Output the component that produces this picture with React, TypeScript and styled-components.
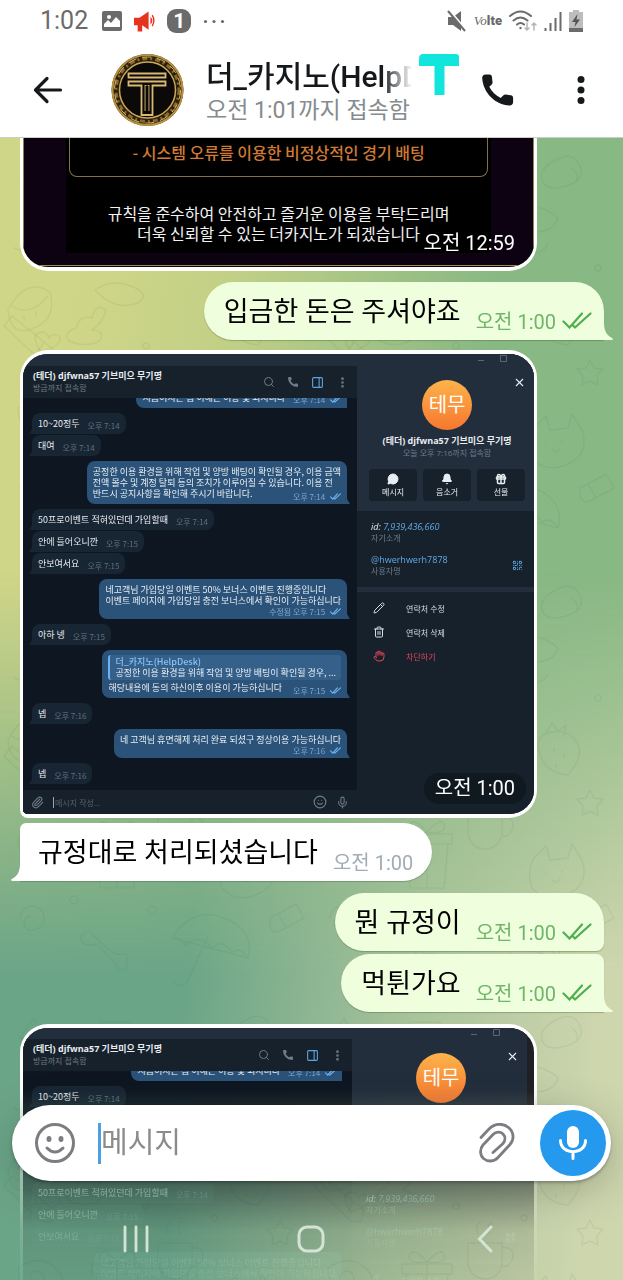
import React from "react";
import styled, { createGlobalStyle, css } from "styled-components";
import { Search, Phone, MoreVertical, X, Bell, Gift, Pencil, Trash2, Hand, Paperclip, Smile, Mic, PanelRight, QrCode, MessageCircle } from "lucide-react";

const GlobalStyle = createGlobalStyle`
  *, *::before, *::after { box-sizing: border-box; }
  body { margin: 0; font-family: Roboto, "Noto Sans CJK KR", sans-serif; }
  button { border: 0; padding: 0; background: none; color: inherit; font: inherit; cursor: pointer; }
  input { border: 0; padding: 0; background: none; outline: none; font: inherit; }
  a { color: inherit; text-decoration: none; }
  svg { display: block; flex: none; }
  p, h1, h2, figure { margin: 0; font-weight: 400; }
`;

/* ---------- page ---------- */

const Screen = styled.div`
  height: 100vh;
  display: flex;
  flex-direction: column;
  overflow: hidden;
  background: #fff;
`;

const StatusBar = styled.div`
  display: flex;
  align-items: center;
  justify-content: space-between;
  height: 42px;
  padding: 0 40px;
  color: #6b6b6b;
`;

const StatusGroup = styled.div<{ $gap: number }>`
  display: flex;
  align-items: center;
  gap: ${(p) => p.$gap}px;
`;

const Clock = styled.span`
  margin-right: 2px;
  font-size: 25px;
  line-height: 30px;
`;

const Badge = styled.span`
  width: 24px;
  height: 24px;
  border-radius: 9px;
  background: #6b6b6b;
  color: #fff;
  font-size: 21px;
  font-weight: 700;
  line-height: 24px;
  text-align: center;
`;

const Volte = styled.span`
  font-size: 13px;
  font-weight: 900;
  line-height: 20px;
  i { font: italic 400 13px "Liberation Serif", serif; }
`;

const Header = styled.header`
  display: flex;
  align-items: center;
  height: 96px;
  padding: 0 37px 0 33px;
  border-bottom: 1px solid #c9cfc6;
  color: #15191c;
`;

const IconButton = styled.button`
  display: grid;
  place-items: center;
  flex: none;
`;

const Spacer = styled.span<{ $w: number }>`
  flex: none;
  width: ${(p) => p.$w}px;
`;

const Raised = styled.span`
  align-self: flex-start;
  padding-top: 12px;
`;

const Peer = styled.div`
  flex: 1;
  min-width: 0;
  margin: 0 7px 0 22px;
  padding-top: 4px;
`;

const PeerName = styled.h1`
  overflow: hidden;
  white-space: nowrap;
  font-size: 30px;
  font-weight: 500;
  line-height: 38px;
  mask-image: linear-gradient(to right, #000 calc(100% - 30px), transparent);
`;

const PeerStatus = styled.p`
  overflow: hidden;
  white-space: nowrap;
  font-size: 23px;
  line-height: 30px;
  color: #858b8e;
`;

/* ---------- chat ---------- */

const Chat = styled.main`
  position: relative;
  flex: 1;
  min-height: 0;
  overflow: hidden;
  background: linear-gradient(98deg, #d0d688 12%, #c2d086 32%, #88b884 66%);
  &::before {
    content: "";
    position: absolute;
    inset: 0;
    background: linear-gradient(95deg, #6ba587 36%, #a9c39b 68%, #ced6ae 94%);
    mask-image: linear-gradient(to bottom, transparent 38%, #000 73%);
  }
`;

const Doodles = styled.svg`
  position: absolute;
  inset: 0;
  width: 100%;
  height: 100%;
`;

const Thread = styled.div`
  position: relative;
  display: flex;
  flex-direction: column;
  height: 100%;
  overflow: hidden;
  mask-image: linear-gradient(to bottom, #000 calc(100% - 190px), rgba(0, 0, 0, 0.4) calc(100% - 94px), rgba(0, 0, 0, 0.12) calc(100% - 50px), rgba(0, 0, 0, 0.06));
`;

const Photo = styled.figure<{ $top?: number; $flat?: boolean }>`
  position: relative;
  flex: none;
  width: 83%;
  margin: ${(p) => p.$top ?? 0}px 0 0 20px;
  overflow: hidden;
  border: 4px solid #fff;
  border-width: ${(p) => (p.$flat ? "0 3px 4px" : "4px 3px")};
  border-radius: ${(p) => (p.$flat ? "0 0 28px 28px" : "28px 28px 28px 8px")};
  background: #fff;
`;

const Stamp = styled.time<{ $clear?: boolean }>`
  position: absolute;
  right: ${(p) => (p.$clear ? 19 : 8)}px;
  bottom: ${(p) => (p.$clear ? 8 : 10)}px;
  padding: ${(p) => (p.$clear ? "1px 0" : "1px 11px")};
  border-radius: 15px;
  background: ${(p) => (p.$clear ? "none" : "rgba(8, 14, 20, 0.45)")};
  color: #fff;
  font-size: 20px;
  line-height: 29px;
`;

const Bubble = styled.div<{ $out?: boolean; $top: number; $corners: string }>`
  position: relative;
  flex: none;
  display: flex;
  align-self: ${(p) => (p.$out ? "flex-end" : "flex-start")};
  gap: 15px;
  height: 58px;
  margin: ${(p) => p.$top}px 19px 0 20px;
  padding: ${(p) => (p.$out ? "0 12px 0 20px" : "0 19px 0 18px")};
  border-radius: ${(p) => p.$corners};
  background: ${(p) => (p.$out ? "#efffde" : "#fff")};
  box-shadow: 0 1px 1px rgba(60, 90, 60, 0.35);
  white-space: nowrap;
`;

const Message = styled.p`
  font-size: 27px;
  line-height: 60px;
  color: #000;
`;

const Meta = styled.div<{ $out?: boolean }>`
  display: flex;
  align-items: center;
  align-self: flex-end;
  gap: 6px;
  height: 40px;
  font-size: 20px;
  color: ${(p) => (p.$out ? "#6fb668" : "#a2acb4")};
`;

const Tail = styled.svg<{ $out?: boolean }>`
  position: absolute;
  bottom: 0;
  ${(p) => (p.$out ? "right: -9px;" : "left: -9px; transform: scaleX(-1);")}
`;

/* ---------- notice poster ---------- */

const Poster = styled.div`
  height: 129px;
  padding: 0 42px;
  border: 1px solid #94804f;
  border-width: 0 1px;
  background: linear-gradient(#000, #000) center top / calc(100% - 84px) 115px no-repeat, linear-gradient(#a08c52, #a08c52) left 127px / 100% 1px no-repeat, #0c0211;
  color: #f2f2f2;
  font-family: "Noto Sans CJK KR", sans-serif;
  font-size: 16px;
  font-weight: 500;
  line-height: 20px;
  text-align: center;
  white-space: nowrap;
`;

const PosterRule = styled.p`
  height: 39px;
  margin: 0 3px 26px;
  padding-top: 4px;
  border: 1px solid #84714a;
  border-top: 0;
  border-radius: 0 0 8px 8px;
  font-weight: 500;
  color: #d27a34;
`;

/* ---------- desktop client screenshot ---------- */

const Desktop = styled.div<{ $small?: boolean }>`
  display: grid;
  grid-template-columns: ${(p) => (p.$small ? "minmax(0, 1fr) 175px 7px" : "minmax(0, 1fr) 177px")};
  background: #1f2024;
  color: #e8edf2;
  font-family: "Open Sans", "Noto Sans CJK KR", sans-serif;
  font-size: 9px;
  line-height: 11px;
  white-space: nowrap;
`;

const Pane = styled.section<{ $small?: boolean }>`
  padding-top: ${(p) => (p.$small ? 11 : 12)}px;
  background: #232e3c;
`;

const PaneHeader = styled.div`
  display: flex;
  align-items: center;
  gap: 12px;
  height: 32px;
  padding: 0 8px 0 10px;
  background: #17212b;
  color: #6d7c8a;
`;

const PaneTitle = styled.div`
  flex: 1;
`;

const Strong = styled.h2`
  font-size: 9px;
  font-weight: 700;
  line-height: 12px;
  color: #e8edf2;
`;

const Faint = styled.p`
  font-size: 8px;
  line-height: 12px;
  color: #6c7b88;
`;

const Log = styled.div`
  display: flex;
  flex-direction: column;
  gap: 1px;
  padding: 0 10px 6px 9px;
  background: #0e1621;
  font-family: "Noto Sans CJK KR", sans-serif;
`;

const Clip = styled.div`
  display: flex;
  align-items: flex-end;
  justify-content: flex-end;
  height: 10px;
  overflow: hidden;
`;

const Mini = styled.div<{ $out?: boolean; $first?: boolean; $stack?: boolean }>`
  display: flex;
  position: relative;
  flex-direction: ${(p) => (p.$stack ? "column" : "row")};
  align-self: ${(p) => (p.$out ? "flex-end" : "flex-start")};
  column-gap: 8px;
  margin-top: ${(p) => (p.$first ? 4 : 0)}px;
  padding: ${(p) => (p.$stack ? "5px 6px 2px" : "5px 6px")};
  border-radius: ${(p) => (p.$out ? "8px 8px 0 8px" : "8px 8px 8px 0")};
  background: ${(p) => (p.$out ? "#2b5278" : "#182533")};
  &::after {
    content: "";
    position: absolute;
    bottom: 0;
    border: 0 solid transparent;
    ${(p) =>
      p.$out
        ? css`
            right: -3px;
            border-width: 5px 0 0 3px;
            border-left-color: #2b5278;
          `
        : css`
            left: -3px;
            border-width: 5px 3px 0 0;
            border-right-color: #182533;
          `}
  }
`;

const MiniMeta = styled.span<{ $out?: boolean; $over?: boolean; $inline?: boolean }>`
  display: flex;
  align-items: center;
  align-self: flex-end;
  gap: 5px;
  height: 11px;
  margin: ${(p) => (p.$over ? -8 : 0)}px 0 ${(p) => (p.$inline ? -2 : 0)}px;
  font-size: 8px;
  color: ${(p) => (p.$out ? "#7da8d3" : "#5f6f7e")};
`;

const Quote = styled.div`
  height: 25px;
  margin-bottom: 2px;
  padding: 1px 5px;
  border-left: 2px solid #6eb2ee;
  border-radius: 3px;
  background: #35608a;
  b { display: block; font-weight: 500; color: #86c3f7; }
`;

const PaneInput = styled.label`
  display: flex;
  align-items: center;
  gap: 9px;
  height: 24px;
  padding: 0 8px;
  background: #17212b;
  color: #6d7c8a;
  input { flex: 1; min-width: 0; padding-left: 1px; border-left: 1px solid #9aa6b2; font-size: 8px; line-height: 11px; }
  input::placeholder { color: #55636f; opacity: 1; }
`;

const Profile = styled.section`
  position: relative;
  background: #17212b;
`;

const ProfileTop = styled.div<{ $small?: boolean }>`
  height: ${(p) => (p.$small ? 155 : 157)}px;
  margin-bottom: 10px;
  padding: ${(p) => (p.$small ? 25 : 26)}px 9px 0 12px;
  background: #232e3c;
  text-align: center;
`;

const Window = styled.div`
  position: absolute;
  top: 0;
  right: 26px;
  color: #596675;
`;

const Close = styled.button`
  position: absolute;
  top: 22px;
  right: 8px;
`;

const Initials = styled.div`
  width: 50px;
  height: 50px;
  margin: 0 auto 5px;
  border-radius: 50%;
  background: linear-gradient(#fdb34b, #f6772f);
  color: #fff;
  font-size: 20px;
  line-height: 50px;
`;

const Actions = styled.div`
  display: grid;
  grid-template-columns: repeat(3, 1fr);
  gap: 6px;
  margin-top: 10px;
  button {
    display: grid;
    justify-items: center;
    align-content: center;
    gap: 1px;
    height: 32px;
    border-radius: 4px;
    background: #17212b;
    font-size: 8px;
    line-height: 11px;
  }
`;

const Info = styled.div`
  display: flex;
  align-items: center;
  justify-content: space-between;
  margin: 0 11px 10px 14px;
  color: #62a8e4;
  em { color: #e8edf2; }
`;

const Divider = styled.div`
  height: 5px;
  margin-bottom: 4px;
  background: #232e3c;
`;

const MenuItem = styled.button<{ $danger?: boolean }>`
  display: flex;
  align-items: center;
  gap: 21px;
  height: 24px;
  padding-left: 16px;
  font-size: 8px;
  color: ${(p) => (p.$danger ? "#e0455a" : "#d5dce3")};
`;

/* ---------- composer and system keys ---------- */

const Dock = styled.footer`
  position: absolute;
  inset: auto 0 0;
  padding: 0 12px;
`;

const Composer = styled.form`
  display: flex;
  align-items: center;
  height: 76px;
  padding: 0 5px 0 22px;
  border-radius: 38px;
  background: #fff;
  box-shadow: 0 2px 3px rgba(0, 0, 0, 0.25), 0 10px 40px rgba(50, 60, 50, 0.3);
  color: #7b7d80;
  input {
    flex: 1;
    min-width: 0;
    height: 41px;
    margin: 0 20px 0 22px;
    border-left: 3px solid #4c9fe2;
    font-size: 29px;
  }
  input::placeholder { color: #8b8b8b; opacity: 1; }
`;

const MicButton = styled(IconButton)`
  width: 66px;
  height: 66px;
  margin-left: 25px;
  border-radius: 50%;
  background: #2499ee;
`;

const SystemKeys = styled.nav`
  display: flex;
  align-items: center;
  justify-content: space-between;
  height: 99px;
  padding: 17px 112px 0 110px;
  color: #d3e4d5;
  button { width: 28px; }
`;

/* ---------- drawings ---------- */

const Checks = ({ w = 30, h = 17 }: { w?: number; h?: number }) => (
  <svg width={w} height={h} viewBox="0 0 30 17" fill="none" stroke={w > 20 ? "#4fae4e" : "#6cb5f0"} strokeWidth={w > 20 ? 2.2 : 3.2} strokeLinecap="round">
    <path d="M1.500 9.500l6 6L20 1.500M13 15.500L28.500 1.500M11 13.500l2 2" />
  </svg>
);

const BubbleTail = ({ out }: { out?: boolean }) => (
  <Tail $out={out} width="11" height="18" viewBox="0 0 11 18" fill={out ? "#efffde" : "#fff"}>
    <path d="M0 0h2c0 8 2 13 8 16 1.500 .8 1 2-.5 2H0z" />
  </Tail>
);

const CoinAvatar = () => (
  <svg width="73" height="74" viewBox="0 0 73 74" fill="none">
    <circle cx="36.500" cy="37" r="36" fill="#2b2110" />
    <circle cx="36.500" cy="37" r="35" stroke="#b89140" strokeWidth="2" />
    <circle cx="36.500" cy="37" r="31.500" stroke="#8a6a2c" strokeWidth="3" strokeDasharray="5 3 2 3" />
    <circle cx="36.500" cy="37" r="33" stroke="#d9b565" strokeWidth="1" strokeDasharray="9 6" />
    <circle cx="36.500" cy="37" r="28" fill="#0c0a08" stroke="#cda756" strokeWidth="1.500" />
    <path d="M17.500 20.500h37v4h-37zM17.500 28.500h37v4H41.500V62H30.500V32.500h-13zM34 28.500M34.500 32v26M37.500 32v26" stroke="#d8b873" strokeWidth="1.800" />
    <path d="M34.500 33h3v26h-3z" fill="#0c0a08" />
  </svg>
);

const BackArrow = () => (
  <svg width="30" height="28" viewBox="0 0 30 28" fill="none" stroke="currentColor" strokeWidth="3.200" strokeLinecap="round" strokeLinejoin="round">
    <path d="M14 2.500L2.500 14 14 25.500M3 14h24.500" />
  </svg>
);

const CallIcon = () => (
  <svg width="34" height="34" viewBox="0 0 34 34" fill="currentColor">
    <path d="M4.500 1.500h3.800c1.400 0 2.400.9 2.600 2.300l.6 5.300c.1 1-.2 1.900-1 2.600L8.300 13.800c2.500 4.900 6.200 8.700 11.400 11.200l2.500-2.500c.7-.7 1.600-1 2.600-.9l5 .7c1.400.2 2.300 1.200 2.300 2.600V29c0 2-1.500 3.700-3.600 3.600C14 31.700 2.300 20 1.200 5.300 1 3.200 2.500 1.500 4.500 1.500z" />
  </svg>
);

const Dots = () => (
  <svg width="10" height="30" viewBox="0 0 10 30" fill="currentColor">
    <circle cx="5" cy="4.500" r="3.500" /><circle cx="5" cy="15" r="3.500" /><circle cx="5" cy="25.500" r="3.500" />
  </svg>
);

const Emblem = () => (
  <svg width="40" height="42" viewBox="0 0 40 42" fill="#12e6dc">
    <path d="M4 0h33q3 0 3 3v9H25.500v29h-10V12H0V5q0-5 4-5z" />
  </svg>
);

const PictureIcon = () => (
  <svg width="20" height="20" viewBox="0 0 20 20">
    <rect width="20" height="20" rx="2" fill="#6b6b6b" />
    <circle cx="7" cy="6" r="2" fill="#fff" />
    <path d="M2 16V13l4-4 3 3 5-6 4 4v6z" fill="#fff" />
    <path d="M2 17.500h16" stroke="#6b6b6b" strokeWidth="3" />
  </svg>
);

const Megaphone = () => (
  <svg width="21" height="21" viewBox="0 0 23 22" fill="#e5331d">
    <path d="M0 7h6L16 0v20l-7-5v7H4v-7H0z" />
    <path d="M18 5.500q4 4.500 0 9z" />
    <path d="M20 4q3.500 6 0 12" fill="none" stroke="#e5331d" strokeWidth="1.500" />
  </svg>
);

const MoreDots = () => (
  <svg width="22" height="5" viewBox="0 0 22 5" fill="currentColor">
    <circle cx="2.500" cy="2.500" r="1.600" /><circle cx="11" cy="2.500" r="1.600" /><circle cx="19.500" cy="2.500" r="1.600" />
  </svg>
);

const Muted = () => (
  <svg width="20" height="22" viewBox="0 0 20 22" fill="currentColor">
    <path d="M1 7h5l8-6v20l-8-6H1z" />
    <path d="M3 1l17 20" stroke="#fff" strokeWidth="2" /><path d="M1 1l17 20" stroke="currentColor" strokeWidth="2" />
  </svg>
);

const Wifi = () => (
  <svg width="28" height="22" viewBox="0 0 28 22" fill="none" stroke="currentColor" strokeWidth="2" strokeLinecap="round">
    <path d="M1 6q10.500-9 21 0M4.500 10.500q7-6 14 0M8 14.500q3.500-3 7 0" />
    <circle cx="11.500" cy="18" r="1.200" fill="currentColor" stroke="none" />
    <path d="M18 13v7m-2-2l2 2 2-2M25 20v-7m-2 2l2-2 2 2" stroke="#b4b4b4" strokeWidth="1.500" />
  </svg>
);

const Signal = () => (
  <svg width="18" height="20" viewBox="0 0 18 20" stroke="currentColor" strokeWidth="2">
    <path d="M1.500 20v-3M6.500 20v-8M11.500 20V7M16.500 20V1" />
  </svg>
);

const Battery = () => (
  <svg width="14" height="22" viewBox="0 0 14 22">
    <path d="M4 0h6v2h4v20H0V2h4z" fill="#bdbdbd" />
    <path d="M0 18h14v4H0z" fill="#6b6b6b" /><path d="M8.500 4L3 12h3.500L5.500 17 11 9.500H7.500z" fill="#555" />
  </svg>
);

const SmileFace = () => (
  <svg width="42" height="42" viewBox="0 0 42 42" fill="none" stroke="currentColor" strokeWidth="3" strokeLinecap="round">
    <circle cx="21" cy="21" r="18.500" />
    <path d="M13 26q8 8 16 0" />
    <g fill="currentColor" stroke="none"><ellipse cx="15" cy="17" rx="2.500" ry="3" /><ellipse cx="27" cy="17" rx="2.500" ry="3" /></g>
  </svg>
);

const AttachIcon = () => (
  <svg width="36" height="40" viewBox="0 0 36 40" fill="none" stroke="currentColor" strokeWidth="2.800" strokeLinecap="round">
    <path d="M2 14.500L10 6C16 0 24 0 29.500 4.500C35.500 9.500 35 17 31 21.500L19 34.500C15 39 8.500 39 4.500 35.500C.8 32 .6 26 4 22L14 11.500C17 8.500 21.500 8.500 24 11C26.600 13.600 26.500 17.500 24 20.500L14 29.500" />
  </svg>
);

const MicIcon = () => (
  <svg width="30" height="36" viewBox="0 0 30 36" fill="none" stroke="#fff" strokeWidth="3" strokeLinecap="round">
    <rect x="9" y="1" width="12" height="22" rx="6" fill="#fff" stroke="none" />
    <path d="M2.500 15.500c0 15 25 15 25 0M15 27v6.500" />
  </svg>
);

const Wallpaper = () => (
  <Doodles aria-hidden="true">
    <defs>
      <pattern id="doodle" width="310" height="430" patternUnits="userSpaceOnUse">
        <g fill="none" stroke="#2f5a33" strokeOpacity="0.08" strokeWidth="1.500" strokeLinecap="round" strokeLinejoin="round">
          <path d="M8 172q18-34 42-18 8 30-22 38-18 4-20-20zM12 168q18 12 36-10M24 178v4M36 174v4" />
          <path d="M41 214q-12-18 0-20 6 0 8 6 4-6 10-2 6 8-18 16z" />
          <path d="M4 188l8-10 42 34-3 12-10-1zM44 204l-6 9" />
          <path d="M76 190q4-14 16-10 4-16 14-8-4 14-14 20 16 2 6 12-16 6-30-2-4-8 8-12z" />
          <path d="M95 152q20-14 44 0 10 8-4 14-22 6-40-14z" />
          <path d="M165 32l4 9 10 1-7 7 2 10-9-5-9 5 2-10-7-7 10-1z" />
          <path d="M200 80q24-22 48 0-4 14-24 14t-24-14zM212 94q-8 12 4 20 16 4 22-8" />
          <path d="M250 20q14-6 20 8t-14 20-24-6 18-22zM262 30q8 6 4 14" />
          <path d="M238 165q18-6 28 8t-8 34q-22-2-28-20t8-22zM236 165l6-10 6 8 8-6-2 10M244 180v3M254 186v3M246 196v3" />
          <path d="M158 245h34v22q-4 14-17 14t-17-14zM192 250q14-2 10 12-4 8-10 6M168 236q-4-8 2-12M180 236q-4-8 2-12" />
          <path d="M18 270q26-18 44 8 4 20-16 24-26 0-28-32zM30 280a7 7 0 1 0 14 0 7 7 0 1 0-14 0" />
          <path d="M96 276h42l-4 44h-34zM92 266h50v10H92zM117 266v54M117 264q-16-18-18-4 2 6 18 4 16-18 18-4-2 6-18 4" />
          <path d="M224 290l12-12 4 14 18-2 4-14 10 16q8 24-14 34t-36-6q-6-16 2-30zM236 304v2M252 302v2M242 312q4 4 8-1" />
          <path d="M20 350a12 12 0 1 1 12 12 7 7 0 1 1-2-14" />
          <path d="M80 370q8-12 14-2 20 20 24 18 14-2 8 8 4 12-8 6-4-8-22-24-12 4-16-6z" />
          <path d="M172 370q24-38 64-14 18 14 12 34zM172 370q8-2 14 8 12-14 26 2 10-10 20 4 8-6 16 6M208 368l-20 44q-6 10-14 2" />
          <path d="M270 350l26-14 8 14-26 14q-10 0-8-14zM278 346l8 14" />
          <circle cx="146" cy="208" r="3" /><circle cx="288" cy="130" r="3" /><circle cx="74" cy="332" r="4" /><circle cx="152" cy="342" r="4" /><circle cx="214" cy="220" r="3" />
          <path d="M280 222l4 8 9 1-6 7 1 9-8-4-8 4 1-9-6-7 9-1zM20 40l14-20 12 24zM60 60q10-18 22 0t-8 20M100 24h30v24h-30zM100 34h30M14 110q18 8 26-8M94 100a10 10 0 1 1 10 10" />
        </g>
      </pattern>
    </defs>
    <rect width="100%" height="100%" fill="url(#doodle)" />
  </Doodles>
);

/* ---------- parts ---------- */

const Outgoing = ({ text, top, corners, tail }: { text: string; top: number; corners: string; tail?: boolean }) => (
  <Bubble $out $top={top} $corners={corners}>
    <Message>{text}</Message>
    <Meta $out><time>오전 1:00</time><Checks /></Meta>
    {tail && <BubbleTail out />}
  </Bubble>
);

const In = ({ text, time, first }: { text: string; time: string; first?: boolean }) => (
  <Mini $first={first}>
    <span>{text}</span>
    <MiniMeta $inline>오후 {time}</MiniMeta>
  </Mini>
);

const OutMeta = ({ label, over, inline }: { label: string; over?: boolean; inline?: boolean }) => (
  <MiniMeta $out $over={over} $inline={inline}>{label}<Checks w={11} h={7} /></MiniMeta>
);

const DesktopShot = ({ small }: { small?: boolean }) => (
  <Desktop $small={small}>
    <Pane $small={small}>
      <PaneHeader>
        <PaneTitle>
          <Strong>(테더) djfwna57 기브미으 무기명</Strong>
          <Faint>방금까지 접속함</Faint>
        </PaneTitle>
        <Search size={12} />
        <Phone size={12} fill="currentColor" strokeWidth={0} />
        <PanelRight size={13} color="#5ea5e0" />
        <MoreVertical size={13} strokeWidth={3} />
      </PaneHeader>
      <Log>
        <Clip>
          <Mini $out>
            <span>지금이시는 점 이해는 이용 및 되시니다</span>
            <OutMeta inline label="오후 7:14" />
          </Mini>
        </Clip>
        <In first text="10~20정두" time="7:14" />
        <In text="대여" time="7:14" />
        <Mini $out $first $stack>
          <span>공정한 이용 환경을 위해 작업 및 양방 배팅이 확인될 경우, 이용 금액</span>
          <span>전액 몰수 및 계정 탈퇴 등의 조치가 이루어질 수 있습니다. 이용 전</span>
          <span>반드시 공지사항을 확인해 주시기 바랍니다.</span>
          <OutMeta over label="오후 7:14" />
        </Mini>
        <In first text="50프로이벤트 적혀있던데 가입할때" time="7:14" />
        <In text="안에 들어오니깐" time="7:15" />
        <In text="안보여서요" time="7:15" />
        <Mini $out $first $stack>
          <span>네고객님 가입당일 이벤트 50% 보너스 이벤트 진행중입니다</span>
          <span>이벤트 페이지에 가입당일 충전 보너스에서 확인이 가능하십니다</span>
          <OutMeta label="수정됨 오후 7:15" />
        </Mini>
        <In first text="아하 넹" time="7:15" />
        <Mini $out $first $stack>
          <Quote>
            <b>더_카지노(HelpDesk)</b>
            공정한 이용 환경을 위해 작업 및 양방 배팅이 확인될 경우, ...
          </Quote>
          <span>해당내용에 동의 하신이후 이용이 가능하십니다</span>
          <OutMeta over label="오후 7:15" />
        </Mini>
        <In first text="넵" time="7:16" />
        <Mini $out $first $stack>
          <span>네 고객님 휴면해제 처리 완료 되셨구 정상이용 가능하십니다</span>
          <OutMeta label="오후 7:16" />
        </Mini>
        <In first text="넵" time="7:16" />
      </Log>
      <PaneInput>
        <Paperclip size={13} />
        <input placeholder="메시지 작성..." aria-label="메시지 작성" />
        <Smile size={14} />
        <Mic size={13} />
      </PaneInput>
    </Pane>
    <Profile>
      <ProfileTop $small={small}>
        <Window>
          <svg width="34" height="10" viewBox="0 0 34 10" fill="none" stroke="currentColor"><path d="M4 6.500h6M26.500 1.500h6v6h-6z" /></svg>
        </Window>
        <Close aria-label="닫기"><X size={13} /></Close>
        <Initials>테무</Initials>
        <Strong>(테더) djfwna57 기브미으 무기명</Strong>
        <Faint>오늘 오후 7:16까지 접속함</Faint>
        <Actions>
          <button><MessageCircle size={12} fill="currentColor" />메시지</button>
          <button><Bell size={12} fill="currentColor" />음소거</button>
          <button><Gift size={12} strokeWidth={3} />선물</button>
        </Actions>
      </ProfileTop>
      <Info>
        <div>
          <p><em>id:</em> <i>7,939,436,660</i></p>
          <Faint>자기소개</Faint>
        </div>
      </Info>
      <Info>
        <div>
          <a href="#hwerhwerh7878">@hwerhwerh7878</a>
          <Faint>사용자명</Faint>
        </div>
        <QrCode size={11} />
      </Info>
      <Divider />
      <MenuItem><Pencil size={12} />연락처 수정</MenuItem>
      <MenuItem><Trash2 size={12} />연락처 삭제</MenuItem>
      <MenuItem $danger><Hand size={12} />차단하기</MenuItem>
    </Profile>
  </Desktop>
);

export default function App() {
  return (
    <Screen>
      <GlobalStyle />
      <StatusBar>
        <StatusGroup $gap={12}>
          <Clock>1:02</Clock>
          <PictureIcon />
          <Megaphone />
          <Badge>1</Badge>
          <MoreDots />
        </StatusGroup>
        <StatusGroup $gap={7}>
          <Muted />
          <Volte><i>Vo</i>lte</Volte>
          <Wifi />
          <Signal />
          <Battery />
        </StatusGroup>
      </StatusBar>
      <Header>
        <IconButton aria-label="뒤로"><BackArrow /></IconButton>
        <Spacer $w={48} />
        <CoinAvatar />
        <Peer>
          <PeerName>더_카지노(HelpDesk)</PeerName>
          <PeerStatus>오전 1:01까지 접속함</PeerStatus>
        </Peer>
        <Raised><Emblem /></Raised>
        <Spacer $w={22} />
        <IconButton aria-label="통화"><CallIcon /></IconButton>
        <Spacer $w={61} />
        <IconButton aria-label="메뉴"><Dots /></IconButton>
      </Header>
      <Chat>
        <Wallpaper />
        <Thread>
          <Photo $flat>
            <Poster>
              <PosterRule>- 시스템 오류를 이용한 비정상적인 경기 배팅</PosterRule>
              <p>규칙을 준수하여 안전하고 즐거운 이용을 부탁드리며</p>
              <p>더욱 신뢰할 수 있는 더카지노가 되겠습니다</p>
            </Poster>
            <Stamp $clear>오전 12:59</Stamp>
          </Photo>
          <Outgoing text="입금한 돈은 주셔야죠" top={11} corners="29px 29px 0 29px" tail />
          <Photo $top={10}>
            <DesktopShot />
            <Stamp>오전 1:00</Stamp>
          </Photo>
          <Bubble $top={5} $corners="6px 29px 29px 0">
            <Message>규정대로 처리되셨습니다</Message>
            <Meta><time>오전 1:00</time></Meta>
            <BubbleTail />
          </Bubble>
          <Outgoing text="뭔 규정이" top={12} corners="29px 29px 8px 29px" />
          <Outgoing text="먹튄가요" top={3} corners="29px 8px 0 29px" tail />
          <Photo $top={12}>
            <DesktopShot small />
          </Photo>
        </Thread>
        <Dock>
          <Composer onSubmit={(e) => e.preventDefault()}>
            <IconButton type="button" aria-label="이모티콘"><SmileFace /></IconButton>
            <input placeholder="메시지" aria-label="메시지" />
            <IconButton type="button" aria-label="첨부"><AttachIcon /></IconButton>
            <MicButton type="button" aria-label="음성 메시지"><MicIcon /></MicButton>
          </Composer>
          <SystemKeys>
            <IconButton aria-label="최근 앱">
              <svg width="28" height="28" viewBox="0 0 28 28" stroke="currentColor" strokeWidth="2.800" strokeLinecap="round"><path d="M3 2v24M14 2v24M25 2v24" /></svg>
            </IconButton>
            <IconButton aria-label="홈">
              <svg width="28" height="28" viewBox="0 0 28 28" fill="none" stroke="currentColor" strokeWidth="3"><rect x="2" y="2" width="24" height="24" rx="8" /></svg>
            </IconButton>
            <IconButton aria-label="이전">
              <svg width="16" height="28" viewBox="0 0 16 28" fill="none" stroke="currentColor" strokeWidth="3" strokeLinecap="round"><path d="M14 2L2.500 14 14 26" /></svg>
            </IconButton>
          </SystemKeys>
        </Dock>
      </Chat>
    </Screen>
  );
}
